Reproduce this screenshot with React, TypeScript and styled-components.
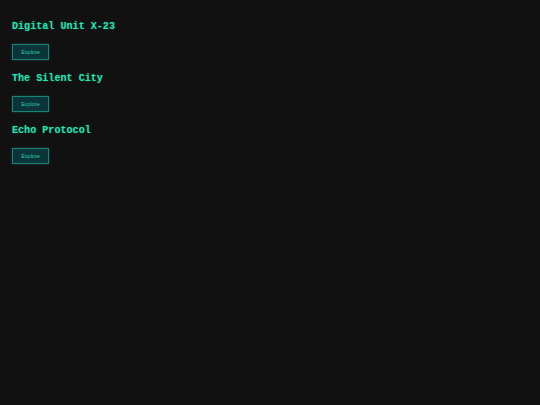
import React from 'react';
import styled, { createGlobalStyle } from 'styled-components';

const GlobalStyle = createGlobalStyle`
  html, body {
    margin: 0;
    padding: 0;
    background: #111111;
  }
  body {
    min-height: 100vh;
  }
`;

const units = ['Digital Unit X-23', 'The Silent City', 'Echo Protocol'];

export default function App() {
  return (
    <>
      <GlobalStyle />
      <Page>
        {units.map((name) => (
          <Unit key={name}>
            <Title>{name}</Title>
            <ExploreButton>Explore</ExploreButton>
          </Unit>
        ))}
      </Page>
    </>
  );
}

const Page = styled.div`
  display: flex;
  flex-direction: column;
  padding: 21px 12px;
  min-height: 100vh;
  box-sizing: border-box;
  background: #111111;
`;

const Unit = styled.section`
  display: flex;
  flex-direction: column;
  align-items: flex-start;
  margin-bottom: 13px;
`;

const Title = styled.h2`
  margin: 0 0 11px;
  font-family: 'Liberation Mono', 'Courier New', monospace;
  font-weight: bold;
  font-size: 10.1px;
  line-height: 12px;
  color: #2ee0b4;
  text-shadow: 0 0 2px rgba(46, 224, 180, 0.35);
`;

const ExploreButton = styled.button`
  width: 37px;
  height: 16px;
  padding: 0;
  box-sizing: border-box;
  background: #0b3438;
  border: 1px solid #1d8278;
  color: #2bc9b0;
  font-family: 'Liberation Sans', Arial, sans-serif;
  font-size: 5.5px;
  line-height: 14px;
  cursor: pointer;
  box-shadow: 0 0 2px rgba(29, 160, 140, 0.4);
`;
